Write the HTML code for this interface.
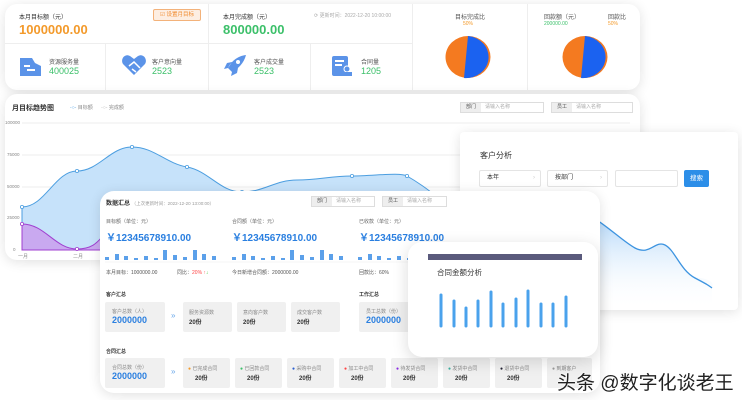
<!DOCTYPE html>
<html><head><meta charset="utf-8"><style>
*{margin:0;padding:0;box-sizing:border-box}
body{width:742px;height:400px;overflow:hidden;background:#fff;font-family:"Liberation Sans","Noto Sans CJK SC",sans-serif;position:relative;color:#333}
.a{position:absolute}
.card{position:absolute;background:#fff;border-radius:10px;box-shadow:0 2px 12px rgba(0,0,0,.12)}
.s{font-size:6px;color:#555;white-space:nowrap}
.xs{font-size:5px;color:#888;white-space:nowrap}
.box{position:absolute;background:#f0f0f0;border-radius:2px}
.inp{position:absolute;height:11px;border:1px solid #ddd;background:#fff;font-size:5px;color:#aaa;line-height:9px;padding-left:24px}
.inp b{position:absolute;left:0;top:0;height:9px;width:20px;background:#eee;color:#555;font-weight:normal;text-align:center}
</style></head><body>

<!-- Panel 1 KPI -->
<div class="card" style="left:5px;top:4px;width:635px;height:86px;border-radius:12px"></div>
<div class="a" style="left:5px;top:43px;width:407px;height:1px;background:#eee"></div>
<div class="a" style="left:208px;top:4px;width:1px;height:86px;background:#eee"></div>
<div class="a" style="left:412px;top:4px;width:1px;height:86px;background:#eee"></div>
<div class="a" style="left:527px;top:4px;width:1px;height:86px;background:#eee"></div>
<div class="a" style="left:105px;top:43px;width:1px;height:47px;background:#eee"></div>
<div class="a" style="left:310px;top:43px;width:1px;height:47px;background:#eee"></div>
<div class="a s" style="left:19px;top:12px;color:#333">本月目标额（元）</div>
<div class="a" style="left:153px;top:9px;width:48px;height:12px;border:1px solid #f3b27a;background:#fdeee2;border-radius:2px;font-size:5.5px;color:#f08a2c;line-height:10px;text-align:center">☑ 设置月目标</div>
<div class="a" style="left:19px;top:22px;font-size:13px;font-weight:bold;color:#f39a2b">1000000.00</div>
<div class="a s" style="left:223px;top:12px;color:#333">本月完成额（元）</div>
<div class="a xs" style="left:314px;top:12px;color:#aaa">⟳ 更新时间：2022-12-20 10:00:00</div>
<div class="a" style="left:223px;top:22px;font-size:13px;font-weight:bold;color:#3cc06a">800000.00</div>

<svg class="a" style="left:18px;top:55px" width="24" height="22"><path d="M2 3h12l3 5 6 3v10H2z" fill="#5b93e8"/><rect x="6" y="10" width="6" height="2" fill="#fff"/><rect x="9" y="14" width="8" height="2" fill="#fff"/></svg>
<div class="a s" style="left:49px;top:57px">资源服务量</div>
<div class="a" style="left:49px;top:66px;font-size:9px;color:#3cc06a">400025</div>
<svg class="a" style="left:121px;top:54px" width="26" height="22"><path d="M13 21L2 10C-1 5 4-1 9 2l4 3 4-3c5-3 10 3 7 8z" fill="#5b93e8"/><path d="M8 12l5-4 6 6M11 15l4 3" stroke="#fff" stroke-width="1.5" fill="none"/></svg>
<div class="a s" style="left:152px;top:57px">客户意向量</div>
<div class="a" style="left:152px;top:66px;font-size:9px;color:#3cc06a">2523</div>
<svg class="a" style="left:223px;top:54px" width="24" height="22"><path d="M23 1C14 2 8 8 5 14l4 4c6-3 12-9 14-17zM5 14l-4 1 3-6 5-1M9 18l-1 4 6-3 1-5" fill="#5b93e8"/><circle cx="15" cy="8" r="2" fill="#fff"/></svg>
<div class="a s" style="left:254px;top:57px">客户成交量</div>
<div class="a" style="left:254px;top:66px;font-size:9px;color:#3cc06a">2523</div>
<svg class="a" style="left:331px;top:55px" width="22" height="22"><rect x="1" y="1" width="16" height="20" rx="2" fill="#5b93e8"/><rect x="4" y="5" width="9" height="2" fill="#fff"/><rect x="4" y="9" width="7" height="2" fill="#fff"/><circle cx="16" cy="14" r="3" fill="#5b93e8" stroke="#fff"/><rect x="12" y="17" width="9" height="4" fill="#5b93e8"/></svg>
<div class="a s" style="left:361px;top:57px">合同量</div>
<div class="a" style="left:361px;top:66px;font-size:9px;color:#3cc06a">1205</div>

<div class="a s" style="left:455px;top:12px">目标完成比</div>
<div class="a xs" style="left:463px;top:21px;color:#f39a2b">50%</div>
<svg class="a" style="left:445px;top:35px" width="48" height="44"><ellipse cx="23" cy="22" rx="22.5" ry="21" fill="#f47a20"/><path d="M23 1A22.5 21 0 0 1 19 43z" fill="#1b62f0"/></svg>
<div class="a s" style="left:544px;top:12px">回款额（元）</div>
<div class="a xs" style="left:544px;top:21px;color:#3cc06a">200000.00</div>
<div class="a s" style="left:608px;top:12px">回款比</div>
<div class="a xs" style="left:608px;top:21px;color:#f39a2b">50%</div>
<svg class="a" style="left:562px;top:35px" width="48" height="44"><ellipse cx="23" cy="22" rx="22.5" ry="21" fill="#f47a20"/><path d="M23 1A22.5 21 0 0 1 19 43z" fill="#1b62f0"/></svg>

<!-- Panel 2 chart -->
<div class="card" style="left:5px;top:94px;width:635px;height:166px;border-radius:12px"></div>
<div class="a" style="left:12px;top:103px;font-size:7px;font-weight:bold;color:#333">月目标趋势图</div>
<div class="a xs" style="left:70px;top:104px"><span style="color:#5ba7e8">-○-</span> 目标额 &nbsp;&nbsp;&nbsp;&nbsp; <span style="color:#bbb">-○-</span> 完成额</div>
<div class="inp" style="left:460px;top:102px;width:84px"><b>部门</b>请输入名称</div>
<div class="inp" style="left:551px;top:102px;width:82px"><b>员工</b>请输入名称</div>
<div class="a xs" style="left:5px;top:120px;font-size:4.5px">100000</div>
<div class="a xs" style="left:7px;top:152px;font-size:4.5px">75000</div>
<div class="a xs" style="left:7px;top:184px;font-size:4.5px">50000</div>
<div class="a xs" style="left:7px;top:215px;font-size:4.5px">25000</div>
<div class="a xs" style="left:13px;top:247px;font-size:4.5px">0</div>
<div class="a xs" style="left:18px;top:253px">一月</div>
<div class="a xs" style="left:73px;top:253px">二月</div>
<svg class="a" style="left:0;top:90px" width="640" height="170">
<g stroke="#e8e8e8" stroke-width="0.7"><line x1="22" y1="33" x2="630" y2="33"/><line x1="22" y1="65" x2="630" y2="65"/><line x1="22" y1="97" x2="630" y2="97"/><line x1="22" y1="128" x2="630" y2="128"/><line x1="22" y1="160" x2="630" y2="160"/></g>
<path d="M22 117C45 117 55 81 77 81S110 57 132 57S165 73 187 77S220 102 242 102S275 90 297 90S330 86 352 86S400 82 407 86S430 100 440 110L440 160L22 160Z" fill="#c6e2fa" stroke="#4c9ee0" stroke-width="1"/>
<path d="M22 134C45 134 55 159 77 159S100 145 110 140L110 160L22 160Z" fill="#c9a9f0" stroke="#a040d0" stroke-width="1"/>
<g fill="#fff" stroke="#4c9ee0" stroke-width="0.8"><circle cx="22" cy="117" r="1.6"/><circle cx="77" cy="81" r="1.6"/><circle cx="132" cy="57" r="1.6"/><circle cx="187" cy="77" r="1.6"/><circle cx="242" cy="102" r="1.6"/><circle cx="352" cy="86" r="1.6"/><circle cx="407" cy="86" r="1.6"/></g>
<g fill="#fff" stroke="#a040d0" stroke-width="0.8"><circle cx="22" cy="134" r="1.6"/><circle cx="77" cy="159" r="1.6"/></g>
</svg>

<!-- Panel 3 customer analysis -->
<div class="card" style="left:460px;top:132px;width:278px;height:178px;border-radius:4px"></div>
<div class="a" style="left:480px;top:150px;font-size:8px;color:#333">客户分析</div>
<div class="a" style="left:479px;top:170px;width:62px;height:17px;border:1px solid #e4e4e4;border-radius:2px;font-size:6px;line-height:15px;padding-left:7px">本年<span style="float:right;margin-right:5px;color:#ccc">›</span></div>
<div class="a" style="left:547px;top:170px;width:61px;height:17px;border:1px solid #e4e4e4;border-radius:2px;font-size:6px;line-height:15px;padding-left:7px">按部门<span style="float:right;margin-right:5px;color:#ccc">›</span></div>
<div class="a" style="left:615px;top:170px;width:63px;height:17px;border:1px solid #e4e4e4;border-radius:2px"></div>
<div class="a" style="left:684px;top:170px;width:25px;height:17px;background:#2c8ee8;border-radius:2px;font-size:6.5px;color:#fff;line-height:17px;text-align:center">搜索</div>
<svg class="a" style="left:460px;top:190px" width="278" height="120"><defs><linearGradient id="g" x1="0" y1="0" x2="0" y2="1"><stop offset="0" stop-color="#a9d2f8"/><stop offset="1" stop-color="#fff" stop-opacity="0"/></linearGradient></defs>
<path d="M60 80C80 40 100 20 118 22S160 50 175 58S195 50 205 55S220 85 240 88S250 100 252 98L252 120L60 120Z" fill="url(#g)"/>
<path d="M60 80C80 40 100 20 118 22S160 50 175 58S195 50 205 55S220 80 235 88S248 95 252 98" fill="none" stroke="#3d94e0" stroke-width="1.3"/></svg>

<!-- Panel 4 data summary -->
<div class="card" style="left:100px;top:191px;width:500px;height:202px;border-radius:14px"></div>
<div class="a s" style="left:106px;top:198px;font-weight:bold;color:#333">数据汇总 <span style="font-weight:normal;color:#999;font-size:4.5px">（上次更新时间：2022-12-20 13:00:00）</span></div>
<div class="inp" style="left:311px;top:196px;width:64px"><b>部门</b>请输入名称</div>
<div class="inp" style="left:382px;top:196px;width:65px"><b>员工</b>请输入名称</div>
<div class="a xs" style="left:106px;top:218px;color:#666">目标额（单位：元）</div>
<div class="a xs" style="left:232px;top:218px;color:#666">合同额（单位：元）</div>
<div class="a xs" style="left:359px;top:218px;color:#666">已收款（单位：元）</div>
<div class="a" style="left:106px;top:229px;font-size:10px;font-weight:bold;color:#2a7fe0">￥12345678910.00</div>
<div class="a" style="left:232px;top:229px;font-size:10px;font-weight:bold;color:#2a7fe0">￥12345678910.00</div>
<div class="a" style="left:359px;top:229px;font-size:10px;font-weight:bold;color:#2a7fe0">￥12345678910.00</div>
<svg class="a" style="left:105px;top:246px" width="350" height="18"><g fill="#5ba0ea">
<rect x="0" y="11" width="4" height="3"/><rect x="10" y="8" width="4" height="6"/><rect x="19" y="10" width="4" height="4"/><rect x="29" y="12" width="4" height="2"/><rect x="39" y="10" width="4" height="4"/><rect x="49" y="12" width="4" height="2"/><rect x="58" y="4" width="4" height="10"/><rect x="68" y="9" width="4" height="5"/><rect x="78" y="11" width="4" height="3"/><rect x="88" y="4" width="4" height="10"/><rect x="97" y="8" width="4" height="6"/><rect x="107" y="10" width="4" height="4"/>
<g transform="translate(127,0)"><rect x="0" y="11" width="4" height="3"/><rect x="10" y="8" width="4" height="6"/><rect x="19" y="10" width="4" height="4"/><rect x="29" y="12" width="4" height="2"/><rect x="39" y="10" width="4" height="4"/><rect x="49" y="12" width="4" height="2"/><rect x="58" y="4" width="4" height="10"/><rect x="68" y="9" width="4" height="5"/><rect x="78" y="11" width="4" height="3"/><rect x="88" y="4" width="4" height="10"/><rect x="97" y="8" width="4" height="6"/><rect x="107" y="10" width="4" height="4"/></g>
<g transform="translate(253,0)"><rect x="0" y="11" width="4" height="3"/><rect x="10" y="8" width="4" height="6"/><rect x="19" y="10" width="4" height="4"/><rect x="29" y="12" width="4" height="2"/><rect x="39" y="10" width="4" height="4"/><rect x="49" y="12" width="4" height="2"/><rect x="58" y="4" width="4" height="10"/><rect x="68" y="9" width="4" height="5"/><rect x="78" y="11" width="4" height="3"/></g></g>
<line x1="0" y1="16" x2="345" y2="16" stroke="#eee" stroke-width="0.6"/></svg>
<div class="a xs" style="left:106px;top:269px;color:#555">本月目标：1000000.00</div>
<div class="a xs" style="left:177px;top:269px;color:#555">同比：<span style="color:#f44">20%</span> <span style="color:#f44">↑</span><span style="color:#3c3">↓</span></div>
<div class="a xs" style="left:232px;top:269px;color:#555">今日新增合同额：2000000.00</div>
<div class="a xs" style="left:359px;top:269px;color:#555">回款比：60%</div>
<div class="a xs" style="left:106px;top:291px;color:#333;font-weight:bold">客户汇总</div>
<div class="a xs" style="left:359px;top:291px;color:#333;font-weight:bold">工作汇总</div>
<div class="box" style="left:105px;top:302px;width:60px;height:30px"></div>
<div class="a xs" style="left:112px;top:308px">客户总数（人）</div>
<div class="a" style="left:112px;top:315px;font-size:9px;font-weight:bold;color:#2a7fe0">2000000</div>
<div class="a" style="left:171px;top:311px;font-size:8px;color:#6aa8ea">»</div>
<div class="box" style="left:183px;top:302px;width:49px;height:30px"></div>
<div class="box" style="left:237px;top:302px;width:49px;height:30px"></div>
<div class="box" style="left:291px;top:302px;width:49px;height:30px"></div>
<div class="a xs" style="left:189px;top:309px">服务资源数</div><div class="a" style="left:189px;top:317px;font-size:6px;font-weight:bold">20份</div>
<div class="a xs" style="left:243px;top:309px">意向客户数</div><div class="a" style="left:243px;top:317px;font-size:6px;font-weight:bold">20份</div>
<div class="a xs" style="left:297px;top:309px">成交客户数</div><div class="a" style="left:297px;top:317px;font-size:6px;font-weight:bold">20份</div>
<div class="box" style="left:359px;top:302px;width:66px;height:30px"></div>
<div class="a xs" style="left:366px;top:308px">员工总数（份）</div>
<div class="a" style="left:366px;top:315px;font-size:9px;font-weight:bold;color:#2a7fe0">2000000</div>
<div class="a xs" style="left:106px;top:348px;color:#333;font-weight:bold">合同汇总</div>
<div class="box" style="left:105px;top:358px;width:60px;height:30px"></div>
<div class="a xs" style="left:112px;top:364px">合同总数（份）</div>
<div class="a" style="left:112px;top:371px;font-size:9px;font-weight:bold;color:#2a7fe0">2000000</div>
<div class="a" style="left:171px;top:367px;font-size:8px;color:#6aa8ea">»</div>
<div class="box" style="left:183px;top:358px;width:47px;height:30px"></div><div class="a xs" style="left:188px;top:365px"><span style="color:#f39a2b">●</span> 已完成合同</div><div class="a" style="left:195px;top:373px;font-size:6px;font-weight:bold">20份</div>
<div class="box" style="left:235px;top:358px;width:47px;height:30px"></div><div class="a xs" style="left:240px;top:365px"><span style="color:#3cc06a">●</span> 已回款合同</div><div class="a" style="left:247px;top:373px;font-size:6px;font-weight:bold">20份</div>
<div class="box" style="left:287px;top:358px;width:47px;height:30px"></div><div class="a xs" style="left:292px;top:365px"><span style="color:#2a5fd0">●</span> 采购中合同</div><div class="a" style="left:299px;top:373px;font-size:6px;font-weight:bold">20份</div>
<div class="box" style="left:339px;top:358px;width:47px;height:30px"></div><div class="a xs" style="left:344px;top:365px"><span style="color:#f44">●</span> 加工中合同</div><div class="a" style="left:351px;top:373px;font-size:6px;font-weight:bold">20份</div>
<div class="box" style="left:391px;top:358px;width:47px;height:30px"></div><div class="a xs" style="left:396px;top:365px"><span style="color:#8a2be2">●</span> 待发货合同</div><div class="a" style="left:403px;top:373px;font-size:6px;font-weight:bold">20份</div>
<div class="box" style="left:443px;top:358px;width:47px;height:30px"></div><div class="a xs" style="left:448px;top:365px"><span style="color:#3cb0a0">●</span> 发货中合同</div><div class="a" style="left:455px;top:373px;font-size:6px;font-weight:bold">20份</div>
<div class="box" style="left:495px;top:358px;width:47px;height:30px"></div><div class="a xs" style="left:500px;top:365px"><span style="color:#223">●</span> 退货中合同</div><div class="a" style="left:507px;top:373px;font-size:6px;font-weight:bold">20份</div>
<div class="box" style="left:547px;top:358px;width:45px;height:30px"></div><div class="a xs" style="left:552px;top:365px"><span style="color:#999">●</span> 到期客户</div>

<!-- Panel 5 contract amount -->
<div class="card" style="left:408px;top:242px;width:190px;height:115px;border-radius:14px;box-shadow:0 4px 16px rgba(0,0,0,.15)"></div>
<div class="a" style="left:428px;top:254px;width:154px;height:6px;background:#5a5a7c"></div>
<div class="a" style="left:437px;top:267px;font-size:7.5px;color:#333">合同金额分析</div>
<svg class="a" style="left:436px;top:285px" width="140" height="44"><g stroke="#4aa2ec" stroke-width="3" stroke-linecap="round">
<line x1="5" y1="10" x2="5" y2="41"/><line x1="18" y1="16" x2="18" y2="41"/><line x1="30" y1="23" x2="30" y2="41"/><line x1="42" y1="16" x2="42" y2="41"/><line x1="55" y1="7" x2="55" y2="41"/><line x1="67" y1="19" x2="67" y2="41"/><line x1="80" y1="14" x2="80" y2="41"/><line x1="92" y1="6" x2="92" y2="41"/><line x1="105" y1="19" x2="105" y2="41"/><line x1="117" y1="19" x2="117" y2="41"/><line x1="130" y1="12" x2="130" y2="41"/></g></svg>

<div class="a" style="left:557px;top:368px;font-size:19px;color:#222;white-space:nowrap;text-shadow:0 0 2px #fff,0 0 2px #fff">头条 @数字化谈老王</div>
</body></html>
